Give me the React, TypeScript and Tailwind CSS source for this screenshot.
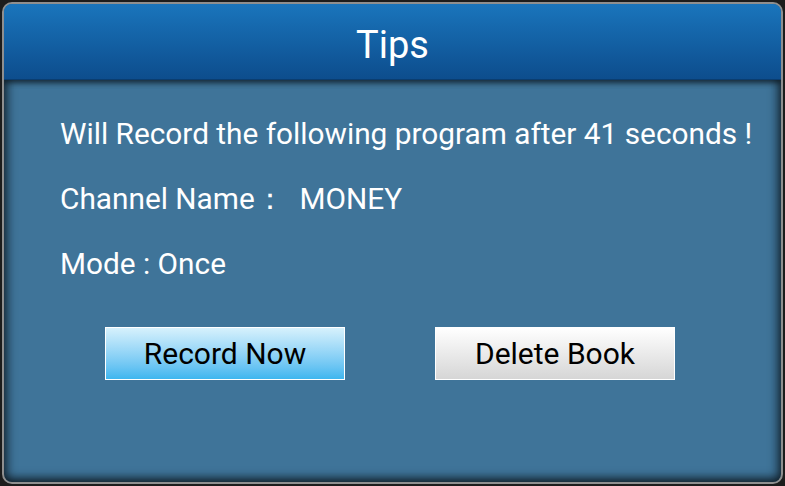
import React from "react";

export default function App() {
  return (
    <div className="w-[785px] h-[486px] bg-[#1c1c1c] p-[2px]" style={{ fontFamily: "Roboto, 'Noto Sans', sans-serif" }}>
      <div className="w-full h-full rounded-[10px] border-2 border-[#8f8f8f] bg-[#3f7499] overflow-hidden flex flex-col shadow-[inset_0_0_8px_rgba(0,0,0,0.5)]">
        <div className="h-[76px] shrink-0 bg-gradient-to-b from-[#1a75bc] to-[#0d4d8d] flex items-center justify-center shadow-[0_3px_5px_rgba(0,0,0,0.45)] relative z-10 border-b border-[#0a3d70]">
          <span className="text-white text-[38px] leading-none mt-[6px]">Tips</span>
        </div>
        <div className="flex-1 flex flex-col pl-[56px] pt-[21px] shadow-[inset_0_-6px_8px_rgba(0,0,0,0.35),inset_6px_0_8px_rgba(0,0,0,0.25),inset_-6px_0_8px_rgba(0,0,0,0.25)]">
          <div className="text-white text-[29.8px] leading-[65px] flex flex-col">
            <span>Will Record the following program after 41 seconds !</span>
            <span className="whitespace-pre">Channel Name：  MONEY</span>
            <span>Mode : Once</span>
          </div>
          <div className="flex gap-[90px] pl-[45px] mt-[31px]">
            <button className="w-[240px] h-[53px] border border-white bg-gradient-to-b from-[#d6f1fc] to-[#3cb6ef] text-black text-[30px] leading-none">Record Now</button>
            <button className="w-[240px] h-[53px] border border-white bg-gradient-to-b from-[#ffffff] to-[#d6d6d6] text-black text-[30px] leading-none">Delete Book</button>
          </div>
        </div>
      </div>
    </div>
  );
}
